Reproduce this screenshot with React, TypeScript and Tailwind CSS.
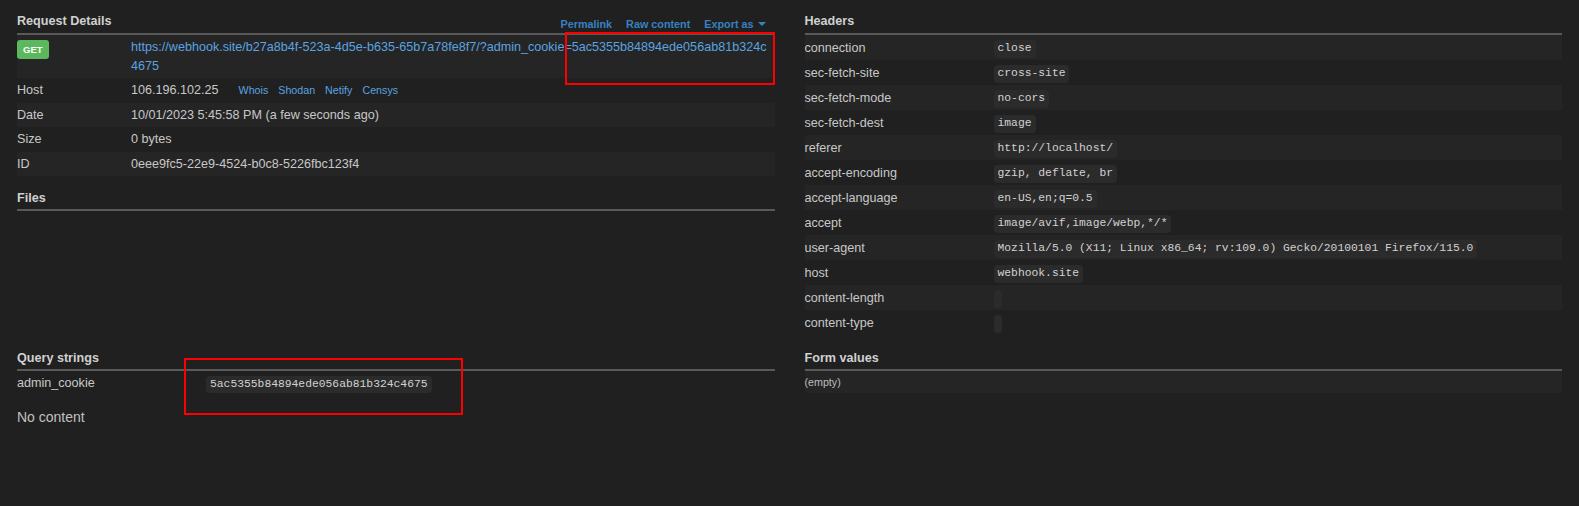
import React from 'react';

const headers: [string, string][] = [
  ['connection', 'close'],
  ['sec-fetch-site', 'cross-site'],
  ['sec-fetch-mode', 'no-cors'],
  ['sec-fetch-dest', 'image'],
  ['referer', 'http://localhost/'],
  ['accept-encoding', 'gzip, deflate, br'],
  ['accept-language', 'en-US,en;q=0.5'],
  ['accept', 'image/avif,image/webp,*/*'],
  ['user-agent', 'Mozilla/5.0 (X11; Linux x86_64; rv:109.0) Gecko/20100101 Firefox/115.0'],
  ['host', 'webhook.site'],
  ['content-length', ''],
  ['content-type', ''],
];

const Code = ({ children }: { children?: React.ReactNode }) => (
  <code className="inline-block h-[17.5px] min-w-[8px] rounded-[4px] bg-[#2b2b2b] px-[4px] py-[2px] align-middle font-['Liberation_Mono',monospace] text-[11.34px] leading-[13.5px] text-[#d2d2d2]">
    {children}
  </code>
);

const SectionTitle = ({ title, className = '', children }: { title: string; className?: string; children?: React.ReactNode }) => (
  <div className={`flex items-end justify-between border-b-2 border-[#595959] ${className}`}>
    <h5 className="text-[12.6px] font-bold leading-[18px] text-[#d0d0d0]">{title}</h5>
    {children}
  </div>
);

const App: React.FC = () => {
  return (
    <div className="relative min-h-[506px] w-full bg-[#202020] font-['Liberation_Sans',Arial,sans-serif] text-[12.6px] text-[#c8c8c8]">
      <div className="grid grid-cols-2 gap-[30px] px-[17px]">
        {/* left column */}
        <div>
          <SectionTitle title="Request Details" className="pt-[12px] pb-[3px]">
            <div className="mb-[-2px] flex items-center gap-[14px] pr-[9px] text-[10.8px] font-bold leading-[16px] text-[#3781c0]">
              <span>Permalink</span>
              <span>Raw content</span>
              <span className="flex items-center">
                Export as
                <span className="ml-[4px] inline-block h-0 w-0 border-x-[4px] border-t-[4px] border-x-transparent border-t-[#3781c0]" />
              </span>
            </div>
          </SectionTitle>

          <div>
            <div className="flex bg-[#252525] py-[3px] leading-[18.5px]">
              <div className="w-[114px] shrink-0">
                <span className="mt-[2px] inline-block h-[19px] rounded-[3px] bg-[#5cb85c] px-[6px] text-[9.5px] font-bold leading-[19px] text-white">GET</span>
              </div>
              <div className="min-w-0 flex-1 break-all pr-[6px] text-[#5aa3e0]">
                https://webhook.site/b27a8b4f-523a-4d5e-b635-65b7a78fe8f7/?admin_cookie=5ac5355b84894ede056ab81b324c4675
              </div>
            </div>
            <div className="flex py-[3px] leading-[18.5px]">
              <div className="w-[114px] shrink-0">Host</div>
              <div className="flex items-center">
                106.196.102.25
                <span className="ml-[20px] flex gap-[10px] text-[10.7px] text-[#5aa3e0]">
                  <span>Whois</span>
                  <span>Shodan</span>
                  <span>Netify</span>
                  <span>Censys</span>
                </span>
              </div>
            </div>
            <div className="flex bg-[#252525] py-[3px] leading-[18.5px]">
              <div className="w-[114px] shrink-0">Date</div>
              <div>10/01/2023 5:45:58 PM (a few seconds ago)</div>
            </div>
            <div className="flex py-[3px] leading-[18.5px]">
              <div className="w-[114px] shrink-0">Size</div>
              <div>0 bytes</div>
            </div>
            <div className="flex bg-[#252525] py-[3px] leading-[18.5px]">
              <div className="w-[114px] shrink-0">ID</div>
              <div>0eee9fc5-22e9-4524-b0c8-5226fbc123f4</div>
            </div>
          </div>

          <SectionTitle title="Files" className="pt-[13px] pb-[2px]" />
          <div className="h-[125px]" />

          <SectionTitle title="Query strings" className="pt-[13px] pb-[2px]" />
          <div className="flex py-[3px] leading-[18px]">
            <div className="w-[189px] shrink-0">admin_cookie</div>
            <div className="pt-[1px]">
              <Code>5ac5355b84894ede056ab81b324c4675</Code>
            </div>
          </div>
          <p className="mt-[11px] text-[14px] leading-[20px] text-[#c0c0c0]">No content</p>
        </div>

        {/* right column */}
        <div>
          <SectionTitle title="Headers" className="pt-[12px] pb-[3px]" />
          <div>
            {headers.map(([k, v], i) => (
              <div key={k} className={`flex h-[25px] items-center ${i % 2 === 0 ? 'bg-[#252525]' : ''}`}>
                <div className="w-[189px] shrink-0 leading-[18px]">{k}</div>
                <div className="pt-[2px] leading-[18px]">
                  <Code>{v}</Code>
                </div>
              </div>
            ))}
          </div>

          <SectionTitle title="Form values" className="pt-[14px] pb-[2px]" />
          <div className="flex h-[22px] items-center bg-[#252525] text-[10.7px] text-[#bdbdbd]">(empty)</div>
        </div>
      </div>

      {/* red annotation boxes */}
      <div className="pointer-events-none absolute left-[565px] top-[32px] h-[53px] w-[210px] border-2 border-[#ff0000]" />
      <div className="pointer-events-none absolute left-[184px] top-[358px] h-[57px] w-[279px] border-2 border-[#ff0000]" />
    </div>
  );
};

export default App;
